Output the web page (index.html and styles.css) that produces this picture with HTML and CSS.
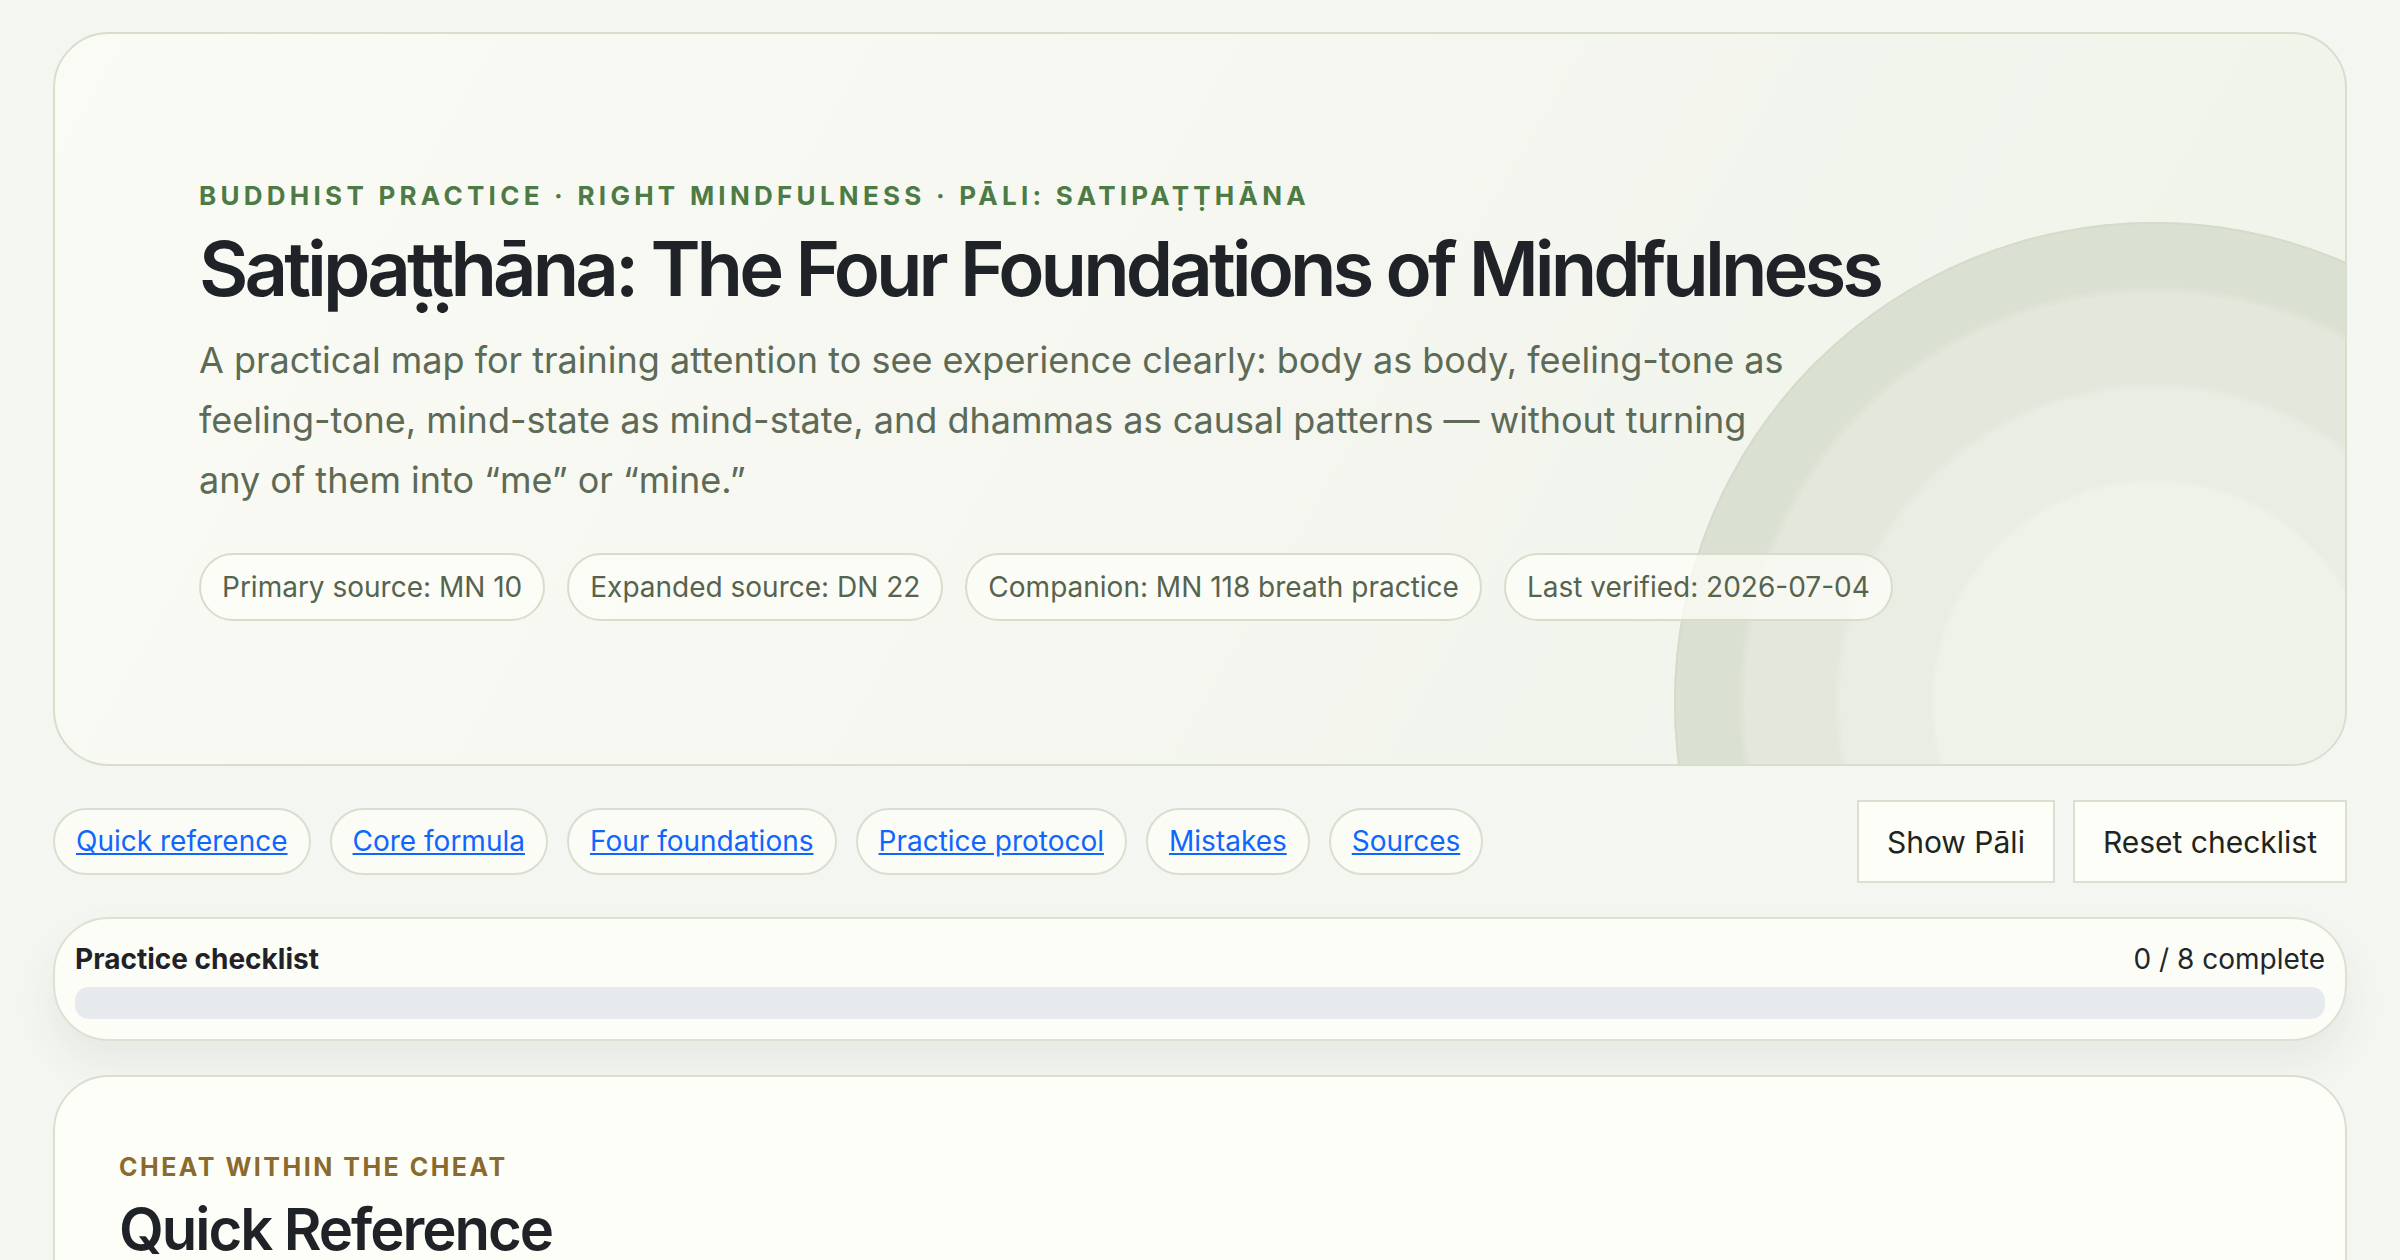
FILE: index.html
```html
<!DOCTYPE html>
<html lang="en">
<head>
  <meta charset="UTF-8">
  <meta name="viewport" content="width=device-width, initial-scale=1.0">
  <title>Satipaṭṭhāna: The Four Foundations of Mindfulness</title>
  <link rel="stylesheet" href="styles.css">
</head>
<body>

  <main class="page">

    <header class="hero">
      <div class="hero-rings"></div>
      <div class="hero-body">
        <p class="eyebrow">Buddhist practice · Right mindfulness · Pāli: Satipaṭṭhāna</p>
        <h1>Satipaṭṭhāna: The Four Foundations of Mindfulness</h1>
        <p class="lede">A practical map for training attention to see experience clearly: body as body, feeling-tone as feeling-tone, mind-state as mind-state, and dhammas as causal patterns — without turning any of them into “me” or “mine.”</p>
        <div class="chips">
          <span class="chip">Primary source: MN 10</span>
          <span class="chip">Expanded source: DN 22</span>
          <span class="chip">Companion: MN 118 breath practice</span>
          <span class="chip">Last verified: 2026-07-04</span>
        </div>
      </div>
    </header>

    <div class="toolbar">
      <nav class="toc">
        <a href="#quick">Quick reference</a>
        <a href="#formula">Core formula</a>
        <a href="#foundations">Four foundations</a>
        <a href="#protocol">Practice protocol</a>
        <a href="#mistakes">Mistakes</a>
        <a href="#sources">Sources</a>
      </nav>
      <div class="actions">
        <button id="pali-btn">Show Pāli</button>
        <button id="reset-btn">Reset checklist</button>
      </div>
    </div>

    <div class="progress">
      <div class="progress-head">
        <strong>Practice checklist</strong>
        <span id="progress-count">0 / 8 complete</span>
      </div>
      <div class="progress-track"><div class="progress-fill" id="progress-fill"></div></div>
    </div>

    <section class="card" id="quick">
      <p class="eyebrow gold">Cheat within the cheat</p>
      <h2>Quick Reference</h2>
    </section>

  </main>

  <script>
    const resetBtn = document.getElementById("reset-btn");
    const paliBtn = document.getElementById("pali-btn");
    const count = document.getElementById("progress-count");
    const fill = document.getElementById("progress-fill");

    resetBtn.addEventListener("click", () => {
      count.innerText = "0 / 8 complete";
      fill.style.width = "0%";
    });

    paliBtn.addEventListener("click", () => {
      document.body.classList.toggle("show-pali");
      paliBtn.innerText = document.body.classList.contains("show-pali") ? "Hide Pāli" : "Show Pāli";
    });
  </script>

</body>
</html>
```

FILE: styles.css
```css
body {
  margin: 0;
  background-color: #f3f6f1;
  color: #1f2328;
  font-family: Inter, "Noto Sans", sans-serif;
}

.page {
  padding: 32px 53px;
  display: flex;
  flex-direction: column;
  gap: 34px;
}

/* hero */

.hero {
  position: relative;
  overflow: hidden;
  border: 2px solid #d6dfcc;
  border-radius: 56px;
  padding: 144px 144px 143px;
  background: linear-gradient(120deg, #fafbf5 0%, #f4f6ef 55%, #eef3e8 100%);
}

.hero-rings {
  position: absolute;
  top: 188px;
  right: -289px;
  width: 960px;
  height: 960px;
  border-radius: 50%;
  box-shadow: inset 0 0 0 2px #d3dcc9;
  background: radial-gradient(circle closest-side,
    #eef2e8 0 218px,
    #e9ede4 224px 312px,
    #e3e7dc 320px 408px,
    #dbe1d2 416px 100%);
}

.hero-body {
  position: relative;
}

.eyebrow {
  margin: 0;
  font-size: 26px;
  line-height: 36px;
  font-weight: 700;
  letter-spacing: 0.164em;
  text-transform: uppercase;
  color: #4c7b45;
}

.eyebrow.gold {
  font-size: 25px;
  letter-spacing: 0.1em;
  color: #8b6a2e;
}

h1 {
  margin: 10px 0 0;
  font-size: 76px;
  line-height: 88px;
  font-weight: 600;
  letter-spacing: -0.052em;
}

.lede {
  margin: 18px 0 0;
  max-width: 1600px;
  font-size: 36px;
  line-height: 60px;
  color: #5c6a56;
}

.chips {
  display: flex;
  flex-wrap: wrap;
  gap: 22px;
  margin-top: 43px;
}

.chip {
  padding: 14px 21px;
  font-size: 28px;
  line-height: 36px;
  color: #56634f;
  border: 2px solid #d6decb;
  border-radius: 999px;
  background: rgba(253, 254, 248, 0.75);
}

/* toolbar */

.toolbar {
  display: flex;
  justify-content: space-between;
  align-items: center;
}

.toc {
  display: flex;
  gap: 19px;
}

.toc a {
  padding: 13px 21px;
  font-size: 28px;
  line-height: 37px;
  color: #0f66ff;
  border: 2px solid #d9dfcf;
  border-radius: 999px;
  background: #fbfcf5;
}

.actions {
  display: flex;
  gap: 18px;
}

.actions button {
  height: 83px;
  padding: 0 28px;
  font-family: inherit;
  font-size: 30px;
  color: #1f2421;
  border: 2px solid #d9e0d0;
  border-radius: 0;
  background: #fdfef7;
  cursor: pointer;
}

/* checklist progress */

.progress {
  padding: 21px 20px 20px;
  border: 2px solid #dbe2d2;
  border-radius: 56px;
  background: #fcfdf6;
  box-shadow: 0 22px 44px rgba(60, 70, 50, 0.07);
}

.progress-head {
  display: flex;
  justify-content: space-between;
  font-size: 28px;
  line-height: 39px;
}

.progress-head span {
  color: #22262a;
}

.progress-track {
  margin-top: 8px;
  height: 32px;
  border-radius: 14px;
  background: #e7eaed;
  overflow: hidden;
}

.progress-fill {
  width: 0;
  height: 100%;
  background: #5b8a53;
}

/* sections */

.card {
  padding: 72px 64px;
  border: 2px solid #d9e0d0;
  border-radius: 56px;
  background: #fdfef7;
}

h2 {
  margin: 12px 0 0;
  font-size: 58px;
  line-height: 64px;
  font-weight: 600;
  letter-spacing: -0.035em;
}
```
